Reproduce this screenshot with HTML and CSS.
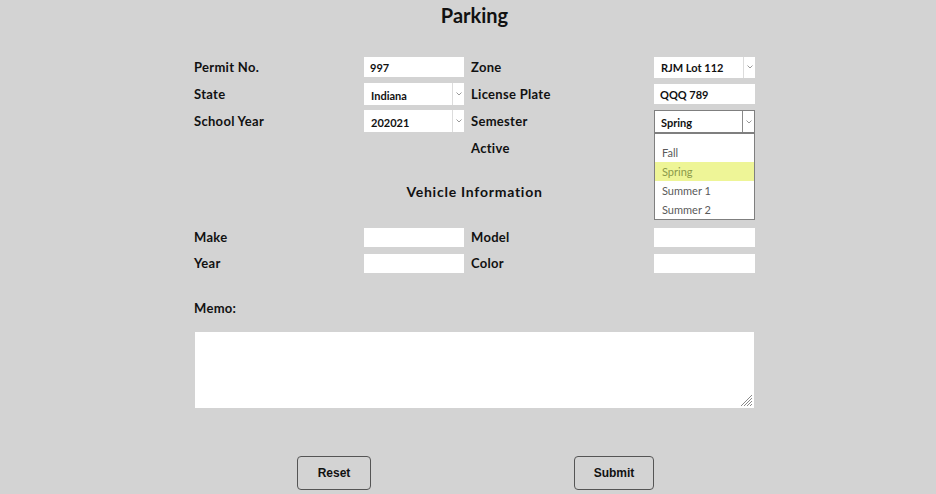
FILE: index.html
```html
<!DOCTYPE html>
<html>
<head>
<meta charset="utf-8">
<link rel="stylesheet" href="styles.css">
</head>
<body>
<div class="page">
  <h1 class="title">Parking</h1>
  <div class="grid top">
    <div class="lbl">Permit No.</div>
    <div class="cell"><div class="inp">997</div></div>
    <div class="lbl lbl2">Zone</div>
    <div class="cell"><div class="sel r1"><span class="val">RJM Lot 112</span><span class="arr"><svg width="6" height="4" viewBox="0 0 6 4"><polyline points="0.5,0.5 3,3 5.5,0.5" fill="none" stroke="#9a9a9a" stroke-width="1"/></svg></span></div></div>

    <div class="lbl">State</div>
    <div class="cell"><div class="sel"><span class="val">Indiana</span><span class="arr"><svg width="6" height="4" viewBox="0 0 6 4"><polyline points="0.5,0.5 3,3 5.5,0.5" fill="none" stroke="#9a9a9a" stroke-width="1"/></svg></span></div></div>
    <div class="lbl lbl2">License Plate</div>
    <div class="cell"><div class="inp">QQQ 789</div></div>

    <div class="lbl">School Year</div>
    <div class="cell"><div class="sel"><span class="val">202021</span><span class="arr"><svg width="6" height="4" viewBox="0 0 6 4"><polyline points="0.5,0.5 3,3 5.5,0.5" fill="none" stroke="#9a9a9a" stroke-width="1"/></svg></span></div></div>
    <div class="lbl lbl2">Semester</div>
    <div class="cell dropwrap">
      <div class="sel open"><span class="val">Spring</span><span class="arr"><svg width="6" height="4" viewBox="0 0 6 4"><polyline points="0.5,0.5 3,3 5.5,0.5" fill="none" stroke="#9a9a9a" stroke-width="1"/></svg></span></div>
      <ul class="drop">
        <li class="blank"></li>
        <li>Fall</li>
        <li class="hl">Spring</li>
        <li>Summer 1</li>
        <li>Summer 2</li>
      </ul>
    </div>

    <div class="lbl"></div>
    <div class="cell"></div>
    <div class="lbl lbl2">Active</div>
    <div class="cell"></div>
  </div>

  <h2 class="sub">Vehicle Information</h2>

  <div class="grid veh">
    <div class="lbl">Make</div>
    <div class="cell"><div class="inp"></div></div>
    <div class="lbl lbl2">Model</div>
    <div class="cell"><div class="inp"></div></div>

    <div class="lbl">Year</div>
    <div class="cell"><div class="inp"></div></div>
    <div class="lbl lbl2">Color</div>
    <div class="cell"><div class="inp"></div></div>
  </div>

  <div class="memo-lbl">Memo:</div>
  <div class="memo">
    <svg class="grip" width="14" height="14" viewBox="0 0 14 14">
      <line x1="13" y1="2" x2="2" y2="13" stroke="#8a8a8a" stroke-width="1"/>
      <line x1="13" y1="5" x2="5" y2="13" stroke="#8a8a8a" stroke-width="1"/>
      <line x1="13" y1="8" x2="8" y2="13" stroke="#8a8a8a" stroke-width="1"/>
      <line x1="13" y1="11" x2="11" y2="13" stroke="#8a8a8a" stroke-width="1"/>
    </svg>
  </div>

  <div class="buttons">
    <button class="btn reset">Reset</button>
    <button class="btn submit">Submit</button>
  </div>
</div>
</body>
</html>
```
FILE: styles.css
```css
html, body {
  margin: 0;
  padding: 0;
  background: #d3d3d3;
  width: 936px;
  height: 494px;
  overflow: hidden;
}
.page {
  width: 561px;
  margin-left: 194px;
  font-family: Lato, "DejaVu Sans", sans-serif;
  color: #111;
}
.title {
  margin: 0;
  padding-top: 3px;
  height: 53px;
  font-size: 20px;
  font-weight: bold;
  text-align: center;
  line-height: 24px;
}
.grid {
  display: grid;
  grid-template-columns: 170px 100px 190px 101px;
  grid-auto-rows: 22px;
  row-gap: 5px;
}
.lbl {
  font-size: 13px;
  font-weight: bold;
  letter-spacing: 0.3px;
  display: flex;
  align-items: center;
}
.lbl2 { padding-left: 7px; }
.cell {
  position: relative;
  display: flex;
  align-items: center;
}
.inp {
  width: 100%;
  height: 20px;
  background: #fff;
  font-size: 11px;
  font-weight: bold;
  display: flex;
  align-items: center;
  padding-left: 6px;
  box-sizing: border-box;
}
.sel {
  width: 100%;
  height: 22px;
  background: #fff;
  display: flex;
  box-sizing: border-box;
  font-size: 11px;
  font-weight: bold;
}
.sel.r1 { height: 21px; }
.sel .val {
  flex: 1;
  display: flex;
  align-items: center;
  padding-left: 7px;
  padding-top: 2px;
}
.sel.r1 .val { padding-top: 0; }
.sel .arr {
  width: 11px;
  border-left: 1px solid #dcdcdc;
  display: flex;
  align-items: center;
  justify-content: center;
}
.sel.open {
  border: 1px solid #7f7f7f;
  height: 23px;
}
.sel.open .val { padding-left: 6px; }
.sel.open .arr { border-left-color: #8a8a8a; }
.dropwrap { align-items: flex-start; }
.drop {
  position: absolute;
  left: 0;
  top: 23px;
  width: 101px;
  margin: 0;
  padding: 0;
  list-style: none;
  background: #fff;
  border: 1px solid #7f7f7f;
  box-sizing: border-box;
  z-index: 5;
  font-size: 11px;
  color: #5a5a5a;
}
.drop li {
  height: 19px;
  line-height: 19px;
  padding-left: 7px;
}
.drop li.blank { height: 9px; }
.drop li.hl {
  background: #eef597;
  color: #8c9a4a;
}
.sub {
  margin: 0;
  height: 68px;
  padding-top: 24px;
  box-sizing: border-box;
  font-size: 14px;
  font-weight: bold;
  letter-spacing: 0.75px;
  text-align: center;
  line-height: 18px;
}
.veh {
  grid-auto-rows: 20px;
  row-gap: 6px;
}
.veh .inp { height: 19px; }
.memo-lbl {
  margin-top: 25px;
  height: 20px;
  font-size: 13px;
  font-weight: bold;
  letter-spacing: 0.3px;
  display: flex;
  align-items: center;
}
.memo {
  margin-top: 14px;
  margin-left: 1px;
  width: 559px;
  height: 76px;
  background: #fff;
  position: relative;
}
.grip {
  position: absolute;
  right: 1px;
  bottom: 1px;
}
.buttons {
  margin-top: 48px;
  position: relative;
  height: 34px;
}
.btn {
  position: absolute;
  top: 0;
  height: 34px;
  background: transparent;
  border: 1px solid #555;
  border-radius: 4px;
  font-family: "Liberation Sans", Arial, sans-serif;
  font-weight: bold;
  font-size: 12px;
  color: #111;
  padding: 0;
}
.reset { left: 103px; width: 74px; }
.submit { left: 380px; width: 80px; }
```
